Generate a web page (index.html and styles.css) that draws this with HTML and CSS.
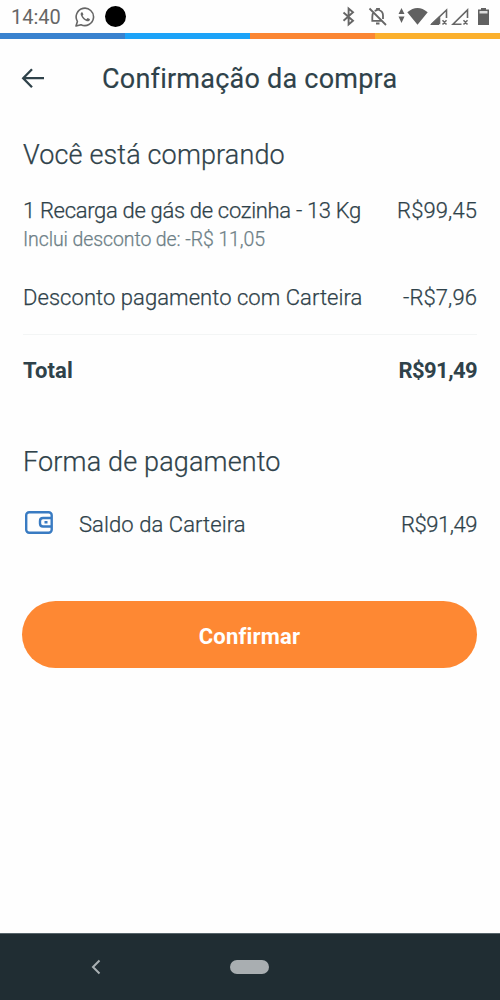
FILE: index.html
```html
<!DOCTYPE html>
<html lang="pt-BR">
<head>
<meta charset="utf-8">
<title>Confirmação da compra</title>
<link rel="stylesheet" href="styles.css">
</head>
<body>
<div class="screen">
  <div class="status">
    <span class="clock">14:40</span>
    <svg class="whatsapp" width="20" height="20" viewBox="0 0 20 20"><path d="M1 19 2.400 14.400A8.700 8.700 0 1 1 6 17.700Z" fill="none" stroke="#666" stroke-width="1.600" stroke-linejoin="round"/><path d="M6.700 5.300c-1 .6-1.300 1.700-.8 3 1.100 2.900 3.200 4.900 6 5.900 1.300.4 2.500-.1 3-1.400l-.1-.7-2.200-1.100-1.200 1.200c-1.700-.7-3-1.900-3.800-3.500l.8-1.100-.8-2.100z" fill="#666"/></svg>
    <span class="dot"></span>
    <svg class="indicators" width="152" height="33" viewBox="340 0 152 33">
      <path d="M343.500 12.500 353 20.800 348.600 24.500V8.500L353 12.300 343.500 20.700" fill="none" stroke="#666" stroke-width="1.900"/>
      <g fill="none" stroke="#666" stroke-width="1.800"><path d="M369.500 8.500 386 25M374 11.500Q372.300 13.500 372.300 17V20.800H382M374.700 10.800 377 10V8.800H379V10Q383 11.200 383 15.500V19"/><path d="M376 23.500H379.500" stroke-width="2"/></g>
      <path d="M401.500 8 404.500 14H398.500ZM398.500 16.500H404.500L401.500 23ZM407.300 12.200Q417.500 3.600 427.700 12.200L417.500 24.800Z" fill="#616161"/>
      <path d="M430 25 439 16.500V25Z" fill="#616161"/>
      <path d="M431.500 24.300 446.500 10V18M439.500 17V24.300M467.500 18V10L453 24.300H461.500" fill="none" stroke="#666" stroke-width="1.600"/>
      <path d="M442.500 20.200 446.500 24.500M446.500 20.200 442.500 24.500M463.500 20.200 467.500 24.500M467.500 20.200 463.500 24.500" stroke="#666" stroke-width="1.500"/>
      <path d="M478 9.500H481V8H486V9.500H489V25H478Z" fill="#616161"/><path d="M479.500 11H487.500V13.500H479.500Z" fill="#ddd"/>
    </svg>
  </div>
  <div class="stripe"><i class="s1"></i><i class="s2"></i><i class="s3"></i><i class="s4"></i></div>
  <header class="header">
    <svg class="back" width="24" height="22" viewBox="0 0 24 22"><path d="M23 10.200H2.500M11 1.200 2.200 10.200 11 19.200" fill="none" stroke="#2f424a" stroke-width="2.300"/></svg>
    <h1 class="title">Confirmação da compra</h1>
  </header>
  <main class="content">
    <h2 class="heading h-buy">Você está comprando</h2>
    <div class="row"><span class="item">1 Recarga de gás de cozinha - 13 Kg</span><span class="price">R$99,45</span></div>
    <div class="note">Inclui desconto de: -R$ 11,05</div>
    <div class="row discount"><span class="wallet-discount">Desconto pagamento com Carteira</span><span class="price">-R$7,96</span></div>
    <div class="row total"><span>Total</span><span class="sum">R$91,49</span></div>
    <h2 class="heading h-pay">Forma de pagamento</h2>
    <div class="row method">
      <svg class="wallet" width="30" height="24" viewBox="0 0 30 24"><g fill="none" stroke="#397bc2" stroke-width="2.400"><rect x="3.200" y="1.200" width="25.500" height="20.500" rx="3"/><path d="M28 7H20Q17 7 17 10V12.500Q17 15.500 20 15.500H28"/></g><rect x="21.500" y="10" width="3" height="2.500" fill="#397bc2"/></svg>
      <span class="label">Saldo da Carteira</span><span class="price balance">R$91,49</span>
    </div>
    <button class="confirm">Confirmar</button>
  </main>
  <nav class="nav">
    <svg class="nav-back" width="10" height="16" viewBox="0 0 10 16"><path d="M8.500 1.500 2 8 8.500 14.500" fill="none" stroke="#a9b0b3" stroke-width="2"/></svg>
    <span class="pill"></span>
  </nav>
</div>
</body>
</html>
```
FILE: styles.css
```css
* { box-sizing: border-box; }
body { margin: 0; font-family: Roboto, "Liberation Sans", sans-serif; font-variant-ligatures: none; color: #2f424a; background: #fff; }
.screen { width: 500px; height: 1000px; display: flex; flex-direction: column; overflow: hidden; background: #fefefe; }
.status { height: 33px; display: flex; align-items: center; padding: 0 8px 0 11px; }
.clock { width: 64px; padding-top: 1px; font-size: 20px; line-height: 33px; color: #666; }
.dot { width: 21px; height: 21px; margin-left: 10px; border-radius: 50%; background: #000; }
.indicators { margin-left: auto; }
.stripe { display: grid; grid-template-columns: repeat(4, 1fr); height: 6px; }
.s1 { background: #3982cf; }
.s2 { background: #1ca3f8; }
.s3 { background: #fb8633; }
.s4 { background: #fbb02d; }
.header { height: 79px; display: flex; align-items: center; padding-left: 21px; }
.title { margin: 0 0 0 57px; font-size: 27px; font-weight: 400; line-height: 36px; letter-spacing: .23px; -webkit-text-stroke: .15px; }
.content { flex: 1; padding: 19px 23px 0; }
.heading { margin: 0; font-size: 27px; font-weight: 300; line-height: 36px; letter-spacing: .15px; -webkit-text-stroke: .25px; }
.row { display: flex; justify-content: space-between; font-size: 22px; font-weight: 300; line-height: 28px; white-space: nowrap; -webkit-text-stroke: .25px; }
.h-buy { margin-bottom: 24px; }
.item { letter-spacing: -.31px; }
.price { letter-spacing: .1px; }
.note { font-size: 19.5px; font-weight: 300; line-height: 29px; letter-spacing: -.1px; color: #6d7f86; -webkit-text-stroke: .25px; }
.discount { margin-top: 30px; }
.wallet-discount { letter-spacing: .06px; }
.total { margin-top: 22px; padding-top: 22px; border-top: 1px solid #f3f5f5; font-weight: 700; letter-spacing: .15px; -webkit-text-stroke: 0; }
.sum { letter-spacing: -.6px; }
.h-pay { margin: 59px 0 31px; }
.method { justify-content: flex-start; }
.label { margin-left: 26px; letter-spacing: .08px; }
.method .price { margin-left: auto; }
.balance { letter-spacing: -.45px; }
.confirm { display: block; width: 455px; height: 67px; margin: 62px 0 0 -1px; padding: 4px 0 0; border: 0; border-radius: 34px; background: #fe8833; color: #fff; font-family: inherit; font-size: 22px; font-weight: 700; line-height: 63px; letter-spacing: .2px; }
.nav { height: 67px; display: flex; align-items: center; padding-left: 91px; background: #202d33; border-top: 1px solid #57646a; }
.nav-back, .pill { margin-bottom: 1px; }
.pill { width: 39px; height: 14px; margin-left: 129px; border-radius: 7px; background: #a9aeb1; }
```
